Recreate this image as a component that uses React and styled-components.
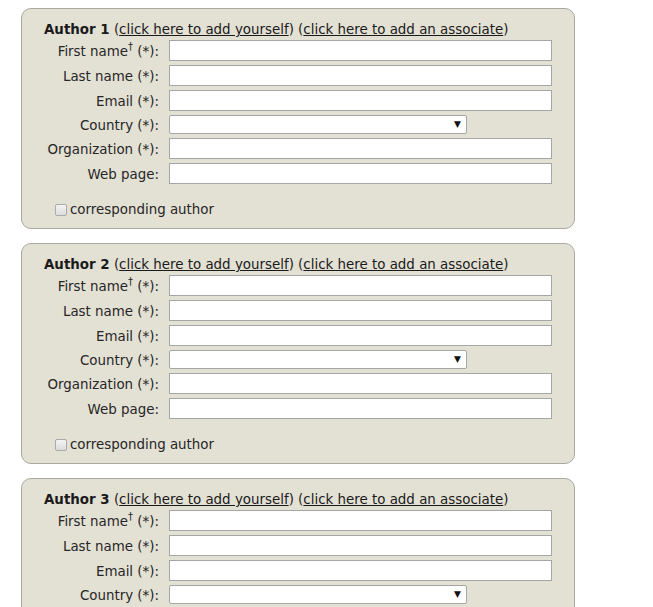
import React from 'react';
import styled, { createGlobalStyle } from 'styled-components';

const GlobalStyle = createGlobalStyle`
  body {
    margin: 8px;
    background: #ffffff;
    font-family: "DejaVu Sans", Verdana, sans-serif;
    font-size: 13.4px;
    color: #1a1a1a;
  }
`;

const fields = [
  { label: 'First name', required: true, dagger: true },
  { label: 'Last name', required: true },
  { label: 'Email', required: true },
  { label: 'Country', required: true, select: true },
  { label: 'Organization', required: true },
  { label: 'Web page' },
];

function AuthorBlock({ index }) {
  return (
    <Panel>
      <Header>
        <b>Author {index}</b> (<Link href="#">click here to add yourself</Link>) (
        <Link href="#">click here to add an associate</Link>)
      </Header>
      <Fields>
        {fields.map((f) => (
          <React.Fragment key={f.label}>
            <Label>
              {f.label}
              {f.dagger && <Sup>†</Sup>}
              {f.required ? ' (*):' : ':'}
            </Label>
            {f.select ? (
              <SelectWrap>
                <Select defaultValue="">
                  <option value=""></option>
                </Select>
                <Arrow>▼</Arrow>
              </SelectWrap>
            ) : (
              <TextInput type="text" />
            )}
          </React.Fragment>
        ))}
      </Fields>
      <CheckRow>
        <Check type="checkbox" />
        corresponding author
      </CheckRow>
    </Panel>
  );
}

export default function App() {
  return (
    <>
      <GlobalStyle />
      <List>
        {[1, 2, 3].map((i) => (
          <AuthorBlock key={i} index={i} />
        ))}
      </List>
    </>
  );
}

const List = styled.div`
  display: flex;
  flex-direction: column;
  gap: 14px;
  padding-left: 13px;
`;

const Panel = styled.div`
  width: 508px;
  padding: 12px 22px 10px 22px;
  background: #e3e0d4;
  border: 1px solid #a9a9a2;
  border-radius: 10px;
`;

const Header = styled.div`
  line-height: 17px;
  margin-bottom: 2px;
  white-space: nowrap;
  b {
    font-weight: bold;
  }
`;

const Link = styled.a`
  color: #1a1a1a;
  text-decoration: underline;
`;

const Fields = styled.div`
  display: grid;
  grid-template-columns: 115px 383px;
  column-gap: 10px;
  row-gap: 4px;
  align-items: center;
`;

const Label = styled.label`
  text-align: right;
  white-space: nowrap;
  color: #262626;
  padding-top: 1px;
`;

const Sup = styled.sup`
  font-size: 10px;
  line-height: 0;
  vertical-align: 6px;
`;

const TextInput = styled.input`
  box-sizing: border-box;
  width: 383px;
  height: 21px;
  margin: 0;
  border: 1px solid #a6a6a6;
  border-radius: 0;
  background: #fff;
  font: inherit;
`;

const SelectWrap = styled.div`
  position: relative;
  width: 298px;
  height: 19px;
`;

const Select = styled.select`
  appearance: none;
  box-sizing: border-box;
  width: 100%;
  height: 100%;
  margin: 0;
  border: 1px solid #a6a6a6;
  border-radius: 2px;
  background: #fff;
  font: inherit;
`;

const Arrow = styled.span`
  position: absolute;
  right: 6px;
  top: 4px;
  font-size: 9px;
  line-height: 10px;
  color: #111;
  pointer-events: none;
`;

const CheckRow = styled.label`
  display: flex;
  align-items: center;
  gap: 3px;
  margin-top: 18px;
  margin-left: 11px;
  line-height: 16px;
  color: #262626;
`;

const Check = styled.input`
  appearance: none;
  box-sizing: border-box;
  width: 12px;
  height: 12px;
  margin: 0;
  border: 1px solid #aaa;
  border-radius: 2px;
  background: linear-gradient(#f4f4f4, #dcdcdc);
`;
